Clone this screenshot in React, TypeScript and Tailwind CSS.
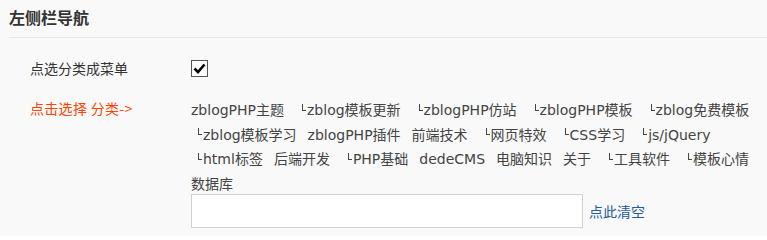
import React from "react";

const font = { fontFamily: '"Noto Sans CJK SC", sans-serif' };
const itemFont = { fontFamily: '"DejaVu Sans", "Noto Sans CJK SC", sans-serif' };

type Item = { t: string; c?: boolean };

const rows: Item[][] = [
  [
    { t: "zblogPHP主题" },
    { t: "zblog模板更新", c: true },
    { t: "zblogPHP仿站", c: true },
    { t: "zblogPHP模板", c: true },
    { t: "zblog免费模板", c: true },
  ],
  [
    { t: "zblog模板学习", c: true },
    { t: "zblogPHP插件" },
    { t: "前端技术" },
    { t: "网页特效", c: true },
    { t: "CSS学习", c: true },
    { t: "js/jQuery", c: true },
  ],
  [
    { t: "html标签", c: true },
    { t: "后端开发" },
    { t: "PHP基础", c: true },
    { t: "dedeCMS" },
    { t: "电脑知识" },
    { t: "关于" },
    { t: "工具软件", c: true },
    { t: "模板心情", c: true },
  ],
  [{ t: "数据库" }],
];

function Cat({ it }: { it: Item }) {
  return (
    <span className="inline-flex items-center mr-[11px] cursor-pointer">
      {it.c && (
        <span className="ml-[7px] mr-[1px] inline-block w-[4px] h-[7px] border-l border-b border-[#444] -translate-y-[3px]" />
      )}
      <span>{it.t}</span>
    </span>
  );
}

export default function App() {
  return (
    <div className="w-[767px] h-[236px] bg-[#f9f9f9] text-[#333] overflow-hidden" style={font}>
      <div className="pl-[9px]">
        <div className="h-[38px] border-b border-[#e8e8e8] flex items-center pb-[4px]">
          <h2 className="text-[16px] font-bold text-[#333] leading-none">左侧栏导航</h2>
        </div>
        <div className="flex mt-[20px] h-[20px] items-center">
          <div className="w-[182px] pl-[21px] text-[14px] text-[#333]">点选分类成菜单</div>
          <span className="w-[17px] h-[17px] border border-[#555] bg-white flex items-center justify-center">
            <svg width="15" height="15" viewBox="0 0 15 15">
              <path d="M2.5 7.5 L6 11 L12.5 3.5" stroke="#000" strokeWidth="2.6" fill="none" />
            </svg>
          </span>
        </div>
        <div className="flex mt-[20px]">
          <div className="w-[182px] pl-[21px] text-[14px] text-[#ff4400] leading-[20px] tracking-[0.3px]">点击选择 分类-&gt;</div>
          <div className="flex flex-col text-[14px] text-[#444]" style={itemFont}>
            {rows.map((r, i) => (
              <div key={i} className="flex leading-[24.5px] h-[24.5px]">
                {r.map((it, j) => (
                  <Cat key={j} it={it} />
                ))}
              </div>
            ))}
            <div className="flex items-center -mt-[2px]">
              <input className="w-[392px] h-[34px] border border-[#d0d0d0] bg-white outline-none" />
              <a className="ml-[6px] text-[#245b9e] text-[14px] cursor-pointer" style={font}>点此清空</a>
            </div>
          </div>
        </div>
      </div>
    </div>
  );
}
